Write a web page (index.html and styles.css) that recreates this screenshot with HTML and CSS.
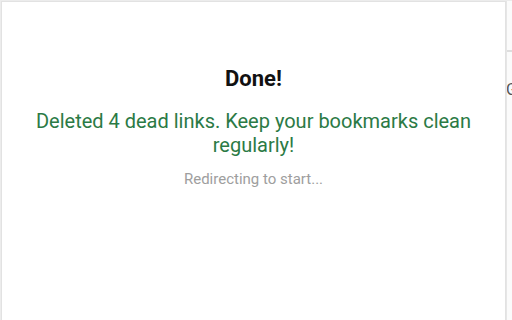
FILE: index.html
```html
<!DOCTYPE html>
<html>
<head>
<meta charset="utf-8">
<link rel="stylesheet" href="styles.css">
</head>
<body>
<div class="frame">
  <div class="card">
    <h1 class="title">Done!</h1>
    <p class="msg">Deleted 4 dead links. Keep your bookmarks clean regularly!</p>
    <p class="sub">Redirecting to start...</p>
  </div>
  <div class="side">
    <div class="side-bar"></div>
    <div class="side-text">G</div>
  </div>
</div>
</body>
</html>
```
FILE: styles.css
```css
html, body {
  margin: 0;
  padding: 0;
  width: 512px;
  height: 320px;
  overflow: hidden;
  background: #ececec;
  font-family: Roboto, "Liberation Sans", sans-serif;
}
.frame {
  display: flex;
  height: 320px;
  padding: 1px 0 0 1px;
  box-sizing: border-box;
}
.card {
  width: 505px;
  flex: none;
  background: #fff;
  border: 1px solid #e2e2e2;
  border-bottom: none;
  box-sizing: border-box;
  text-align: center;
  padding: 63px 20px 0;
}
.title {
  margin: 0;
  font-size: 22px;
  font-weight: 700;
  color: #111;
  line-height: 28px;
}
.msg {
  margin: 16px 0 0;
  font-size: 20px;
  line-height: 24px;
  color: #2b7a45;
}
.sub {
  margin: 12px 0 0;
  font-size: 15px;
  line-height: 20px;
  color: #9e9e9e;
}
.side {
  flex: 1;
  background: #fbfbfb;
  border-left: 1px solid #e6e6e6;
  overflow: hidden;
  position: relative;
}
.side-bar {
  height: 49px;
  border-bottom: 2px solid #dedede;
}
.side-text {
  position: absolute;
  left: -1px;
  top: 80px;
  font-size: 16px;
  color: #555;
  line-height: 18px;
}
```
